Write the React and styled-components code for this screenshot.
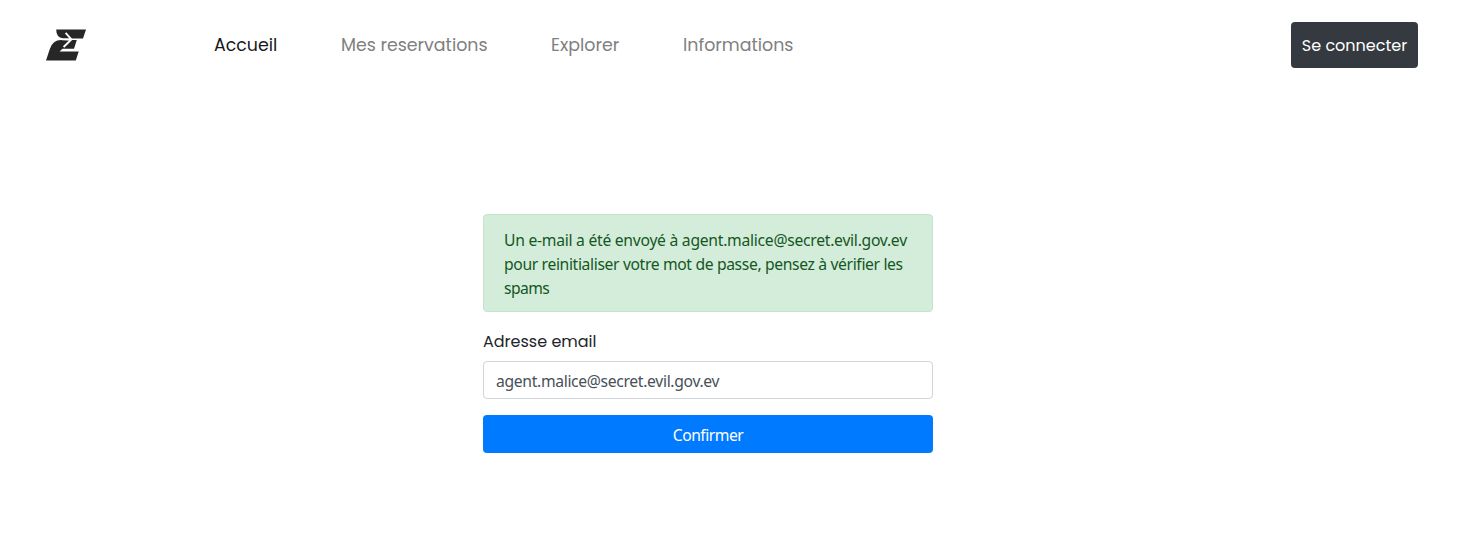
import React from "react";
import styled, { createGlobalStyle } from "styled-components";

const display = `Poppins, Inter, "Liberation Sans", sans-serif`;
const body = `"Segoe UI", "Noto Sans", "Open Sans", sans-serif`;

const GlobalStyle = createGlobalStyle`
  *, *::before, *::after { box-sizing: border-box; }
  body { margin: 0; background: #fff; font-family: ${body}; font-size: 15.7px; line-height: 24px; color: #212529; }
`;
const Header = styled.header`
  display: flex;
  align-items: center;
  height: 90px;
  padding: 0 39px 0 46px;
`;
const Logo = styled.svg`
  width: 40px;
  height: 32px;
  margin-right: 128px;
`;
const Nav = styled.nav`
  display: flex;
  gap: 64px;
  flex: 1;
`;
const NavLink = styled.a`
  width: ${(p) => p.$width}px;
  white-space: nowrap;
  font: 400 17.4px/26px ${display};
  color: ${(p) => (p.$active ? "#191919" : "#808080")};
`;
const Login = styled.button`
  width: 127px;
  height: 46px;
  padding: 2px 0 0;
  border: 0;
  border-radius: 4px;
  background: #343a40;
  color: #fff;
  white-space: nowrap;
  font: 400 16px/24px ${display};
`;
const Form = styled.form`
  width: 450px;
  margin: 124px 0 0 483px;
`;
const Alert = styled.div`
  height: 98px;
  padding: 13px 20px 11px;
  border: 1px solid #c3e6cb;
  border-radius: 4px;
  background: #d4edda;
  color: #155724;
`;
const AlertLine = styled.span`
  display: block;
  white-space: nowrap;
  letter-spacing: ${(p) => p.$tracking}px;
`;
const Label = styled.label`
  display: block;
  margin: 18px 0 7px;
  font: 400 16px/24px ${display};
`;
const Input = styled.input`
  display: block;
  width: 100%;
  height: 38px;
  padding: 7px 12px 5px;
  border: 1px solid #ced4da;
  border-radius: 4px;
  color: #495057;
  background: #fff;
  font: 400 15.7px/24px ${body};
  letter-spacing: -0.33px;
`;
const Submit = styled.button`
  display: block;
  width: 100%;
  height: 38px;
  margin-top: 16px;
  padding: 2px 0 0;
  border: 0;
  border-radius: 4px;
  background: #007bff;
  color: #fff;
  font: 400 15.7px/24px ${body};
  letter-spacing: -0.5px;
`;

export default function App() {
  return (
    <>
      <GlobalStyle />
      <Header>
        <Logo viewBox="0 0 40 32" aria-label="Accueil">
          <g fill="#272727">
            <path d="M10.2 0.4H40L37 9.4H17Q10.2 8.4 10.2 0.4Z" />
            <path d="M15 11H30.8L28 19.7H16.5L13.5 22.5H32.7L29.8 31.6H0L3.8 20Q6.8 11 15 11Z" />
          </g>
          <path d="M19.6 3.8L25.4 10.4L17.6 18M13 9.6Q17 10.8 25 10.4" fill="none" stroke="#fff" strokeWidth="1.9" />
        </Logo>
        <Nav>
          <NavLink $active $width={63}>Accueil</NavLink>
          <NavLink $width={146}>Mes reservations</NavLink>
          <NavLink $width={68}>Explorer</NavLink>
          <NavLink $width={110}>Informations</NavLink>
        </Nav>
        <Login>Se connecter</Login>
      </Header>
      <Form>
        <Alert>
          <AlertLine $tracking={-0.27}>Un e-mail a été envoyé à agent.malice@secret.evil.gov.ev</AlertLine>
          <AlertLine $tracking={-0.36}>pour reinitialiser votre mot de passe, pensez à vérifier les</AlertLine>
          <AlertLine $tracking={-0.6}>spams</AlertLine>
        </Alert>
        <Label>Adresse email</Label>
        <Input defaultValue="agent.malice@secret.evil.gov.ev" />
        <Submit type="button">Confirmer</Submit>
      </Form>
    </>
  );
}
